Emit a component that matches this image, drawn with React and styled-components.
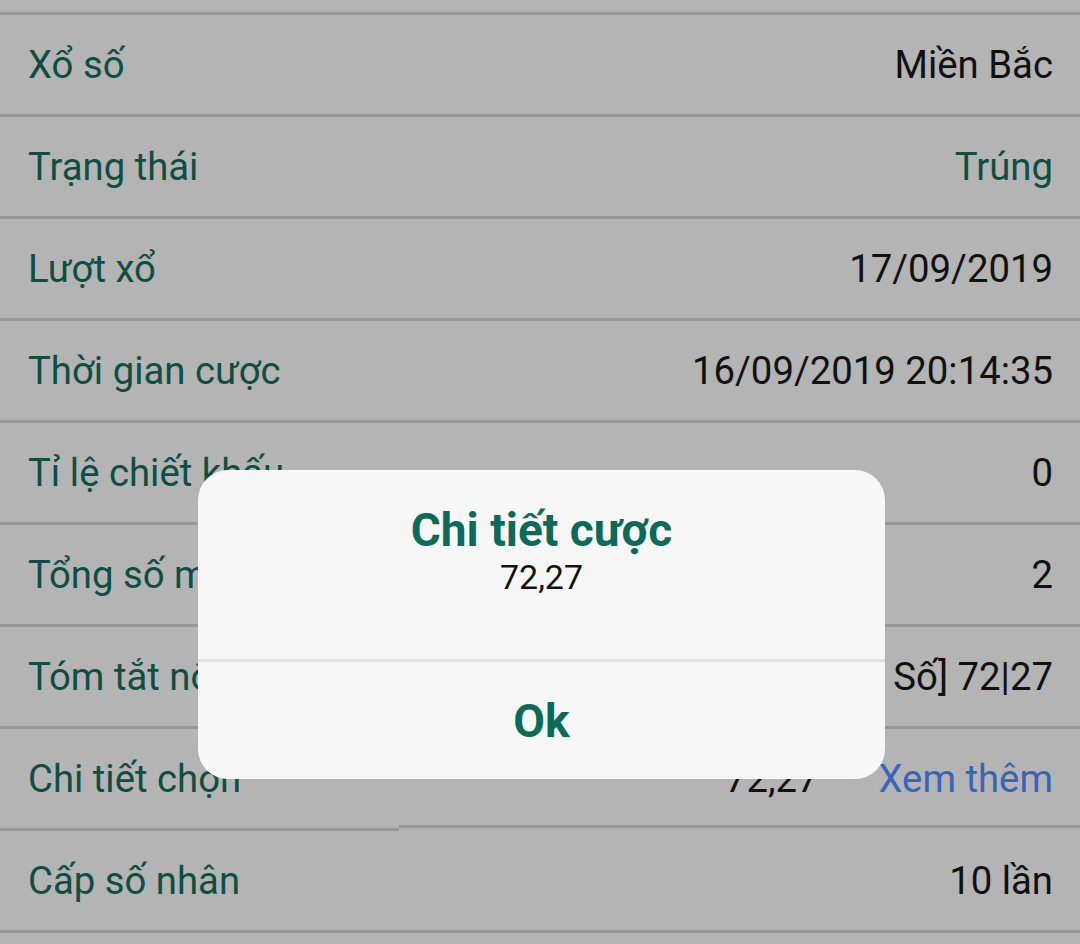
import React from 'react';
import styled, { createGlobalStyle } from 'styled-components';

// -------------------------------------------------------------------------------------------------
// Chi tiết cược: danh sách thông tin + hộp thoại
const rows = [
    { label: 'Xổ số', value: 'Miền Bắc' },
    { label: 'Trạng thái', value: 'Trúng', tone: 'green' },
    { label: 'Lượt xổ', value: '17/09/2019' },
    { label: 'Thời gian cược', value: '16/09/2019 20:14:35' },
    { label: 'Tỉ lệ chiết khấu', value: '0' },
    { label: 'Tổng số mã cược', value: '2' },
    { label: 'Tóm tắt nội dung', value: '[Lô 2 Số] 72|27' },
    { label: 'Chi tiết chọn', value: '72,27', more: true, split: true },
    { label: 'Cấp số nhân', value: '10 lần' },
];

const App = () => {
    return (
        <Page>
            <GlobalStyle />
            <List>
                {rows.map((row) => (
                    <React.Fragment key={row.label}>
                        <Row>
                            <Label>{row.label}</Label>
                            <Values>
                                <Value tone={row.tone}>{row.value}</Value>
                                {row.more && <More>Xem thêm</More>}
                            </Values>
                        </Row>
                        {row.split ? (
                            <SplitLine>
                                <LineLeft />
                                <LineRight />
                            </SplitLine>
                        ) : (
                            <Line />
                        )}
                    </React.Fragment>
                ))}
            </List>

            <Dialog>
                <DialogBody>
                    <Title>Chi tiết cược</Title>
                    <Message>72,27</Message>
                </DialogBody>
                <Divider />
                <OkButton>Ok</OkButton>
            </Dialog>
        </Page>
    );
};

const GlobalStyle = createGlobalStyle`
    html, body {
        margin: 0;
        padding: 0;
        background: #b4b4b4;
    }
    body {
        font-family: Roboto, 'Noto Sans', 'Liberation Sans', sans-serif;
    }
`;

const Page = styled.div`
    position: relative;
    width: 1080px;
    height: 944px;
    overflow: hidden;
    background: #b4b4b4;
`;

const List = styled.div`
    display: flex;
    flex-direction: column;
    padding-top: 12px;

    &::before {
        content: '';
        height: 3px;
        background: #999999;
    }
`;

const Row = styled.div`
    height: 99px;
    display: flex;
    align-items: center;
    justify-content: space-between;
    padding: 0 27px 0 28px;
    font-size: 38.3px;
`;

const Label = styled.span`
    color: #0f4e42;
`;

const Values = styled.div`
    display: flex;
    align-items: center;
    gap: 60px;
`;

const Value = styled.span`
    color: ${(p) => (p.tone === 'green' ? '#0f4e42' : '#111111')};
`;

const More = styled.span`
    color: #3a63bb;
`;

const Line = styled.div`
    height: 3px;
    background: #999999;
`;

const SplitLine = styled.div`
    display: flex;
    height: 6px;
    margin-top: -3px;
`;

const LineLeft = styled.div`
    width: 399px;
    height: 3px;
    margin-top: 3px;
    background: #999999;
`;

const LineRight = styled.div`
    flex: 1;
    height: 3px;
    background: #999999;
`;

const Dialog = styled.div`
    position: absolute;
    top: 470px;
    left: 198px;
    width: 687px;
    height: 309px;
    display: flex;
    flex-direction: column;
    background: #f7f7f7;
    border-radius: 30px;
    overflow: hidden;
`;

const DialogBody = styled.div`
    height: 189px;
    display: flex;
    flex-direction: column;
    align-items: center;
    padding-top: 33px;
    box-sizing: border-box;
`;

const Title = styled.div`
    font-size: 46px;
    font-weight: 700;
    color: #0c6a59;
    line-height: 54px;
`;

const Message = styled.div`
    font-size: 34px;
    color: #111111;
    line-height: 40px;
`;

const Divider = styled.div`
    height: 3px;
    background: #e2e2e2;
`;

const OkButton = styled.div`
    flex: 1;
    display: flex;
    align-items: center;
    justify-content: center;
    font-size: 46px;
    font-weight: 700;
    color: #0c6a59;
    cursor: pointer;
`;

export default App;
